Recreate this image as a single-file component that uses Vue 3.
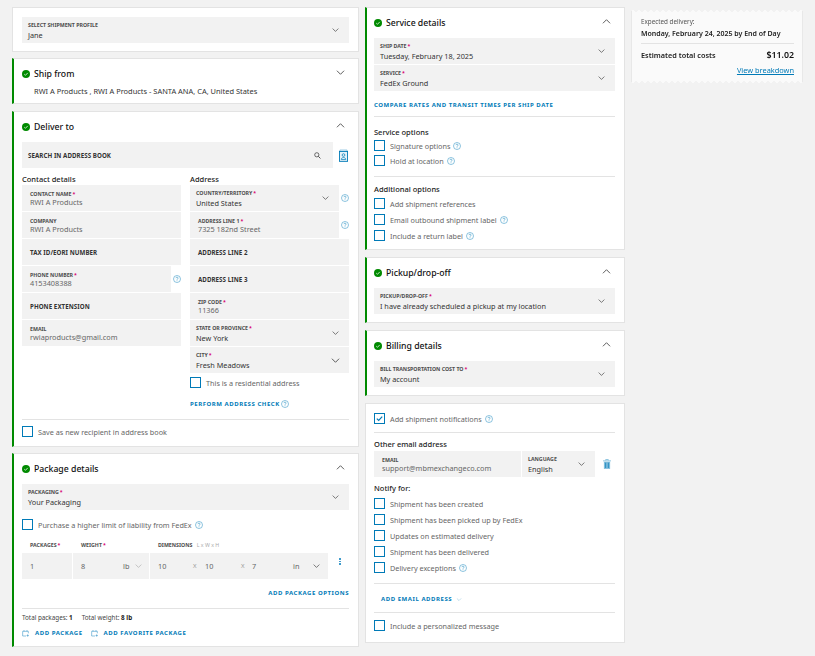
<script setup>
const contact = [
  { label: 'CONTACT NAME', req: true, value: 'RWI A Products' },
  { label: 'COMPANY', value: 'RWI A Products' },
  { label: 'TAX ID/EORI NUMBER' },
  { label: 'PHONE NUMBER', req: true, value: '4153408388', help: true },
  { label: 'PHONE EXTENSION' },
  { label: 'EMAIL', value: 'rwiaproducts@gmail.com' }
]
const address = [
  { label: 'COUNTRY/TERRITORY', req: true, value: 'United States', select: true, help: true },
  { label: 'ADDRESS LINE 1', req: true, value: '7325 182nd Street', help: true, inset: true },
  { label: 'ADDRESS LINE 2', inset: true },
  { label: 'ADDRESS LINE 3', inset: true },
  { label: 'ZIP CODE', req: true, value: '11366', inset: true },
  { label: 'STATE OR PROVINCE', req: true, value: 'New York', select: true },
  { label: 'CITY', req: true, value: 'Fresh Meadows', select: true, bigger: true }
]
const additional = [
  { text: 'Add shipment references' },
  { text: 'Email outbound shipment label', help: true },
  { text: 'Include a return label', help: true }
]
const notify = [
  { text: 'Shipment has been created' },
  { text: 'Shipment has been picked up by FedEx' },
  { text: 'Updates on estimated delivery' },
  { text: 'Shipment has been delivered' },
  { text: 'Delivery exceptions', help: true }
]
</script>

<template>
  <svg class="defs" width="0" height="0" aria-hidden="true">
    <symbol id="chev" viewBox="0 0 12 7"><path d="M1 1l5 5 5-5" fill="none" stroke="currentColor" stroke-width="1.1"/></symbol>
    <symbol id="up" viewBox="0 0 12 7"><path d="M1 6l5-5 5 5" fill="none" stroke="currentColor" stroke-width="1.1"/></symbol>
    <symbol id="ok" viewBox="0 0 16 16"><circle cx="8" cy="8" r="8" fill="#008a00"/><path d="M4.5 8.3l2.4 2.3 4.6-4.8" fill="none" stroke="#fff" stroke-width="1.5"/></symbol>
    <symbol id="help" viewBox="0 0 16 16"><circle cx="8" cy="8" r="7" fill="none" stroke="#2f93c5" stroke-width="1.1"/><path d="M5.8 6.3C5.900 4.900 6.900 4.300 8 4.300s2.200.7 2.200 1.900c0 1.600-2.200 1.700-2.200 3.300M8 10.800v1.400" fill="none" stroke="#2f93c5" stroke-width="1.2"/></symbol>
    <symbol id="pkg" viewBox="0 0 12 12"><path d="M1 3.500h8.500v3M1 3.500v7h5M3 3.500V1.500M7.500 3.500V1.500M8.500 8v3.500M6.800 9.800h3.500" fill="none" stroke="#3f9bcb" stroke-width=".9"/></symbol>
  </svg>

  <div class="page">
    <div class="col left">
      <section class="card plain pad-profile">
        <div class="field select">
          <div class="fieldtext"><span class="lab">SELECT SHIPMENT PROFILE</span><span class="val dark">Jane</span></div>
          <svg class="chev"><use href="#chev" /></svg>
        </div>
      </section>

      <section class="card shipfrom">
        <header class="head">
          <svg class="ok"><use href="#ok" /></svg>
          <h2>Ship from</h2>
          <svg class="toggle"><use href="#chev" /></svg>
        </header>
        <p class="sender">RWI A Products , RWI A Products - SANTA ANA, CA, United States</p>
      </section>

      <section class="card deliver">
        <header class="head">
          <svg class="ok"><use href="#ok" /></svg>
          <h2>Deliver to</h2>
          <svg class="toggle"><use href="#up" /></svg>
        </header>
        <div class="searchrow">
          <div class="field search">
            <span class="lab big">SEARCH IN ADDRESS BOOK</span>
            <svg class="mag" viewBox="0 0 10 10"><circle cx="4" cy="4" r="3" fill="none" stroke="#333" stroke-width="1"/><path d="M6.200 6.200l3 3" stroke="#333" stroke-width="1.200"/></svg>
          </div>
          <svg class="book" viewBox="0 0 10 14">
            <path d="M1 2V1h8v1" fill="none" stroke="#7fbcdb" stroke-width="1"/>
            <rect x=".5" y="2.500" width="9" height="11" fill="#e6f2f8" stroke="#007ab7"/>
            <circle cx="5" cy="6.500" r="1.500" fill="none" stroke="#007ab7" stroke-width=".8"/>
            <path d="M2.500 11.500c0-3 5-3 5 0z" fill="none" stroke="#007ab7" stroke-width=".8"/>
          </svg>
        </div>
        <div class="cols2">
          <div class="subcol">
            <h3 class="subhead">Contact details</h3>
            <div class="stack">
              <div v-for="f in contact" :key="f.label" class="fieldrow">
                <div class="field inset" :class="{ short: f.help }">
                  <div class="fieldtext">
                    <span class="lab" :class="{ big: !f.value }">{{ f.label }}<i v-if="f.req">*</i></span>
                    <span v-if="f.value" class="val">{{ f.value }}</span>
                  </div>
                </div>
                <svg v-if="f.help" class="help side"><use href="#help" /></svg>
              </div>
            </div>
          </div>
          <div class="subcol">
            <h3 class="subhead">Address</h3>
            <div class="stack">
              <div v-for="f in address" :key="f.label" class="fieldrow">
                <div class="field" :class="{ select: f.select, inset: f.inset, short: f.help }">
                  <div class="fieldtext">
                    <span class="lab" :class="{ big: !f.value }">{{ f.label }}<i v-if="f.req">*</i></span>
                    <span v-if="f.value" class="val" :class="{ dark: f.select }">{{ f.value }}</span>
                  </div>
                  <svg v-if="f.select" class="chev" :class="{ wide: f.bigger }"><use href="#chev" /></svg>
                </div>
                <svg v-if="f.help" class="help side"><use href="#help" /></svg>
              </div>
            </div>
            <label class="check residential"><span class="box"></span>This is a residential address</label>
            <a class="link addr">PERFORM ADDRESS CHECK<svg class="help"><use href="#help" /></svg></a>
          </div>
        </div>
        <hr class="rule saverule" />
        <label class="check"><span class="box"></span>Save as new recipient in address book</label>
      </section>

      <section class="card package">
        <header class="head">
          <svg class="ok"><use href="#ok" /></svg>
          <h2>Package details</h2>
          <svg class="toggle"><use href="#up" /></svg>
        </header>
        <div class="field select solo">
          <div class="fieldtext"><span class="lab">PACKAGING<i>*</i></span><span class="val dark">Your Packaging</span></div>
          <svg class="chev"><use href="#chev" /></svg>
        </div>
        <label class="check liability"><span class="box"></span>Purchase a higher limit of liability from FedEx<svg class="help"><use href="#help" /></svg></label>
        <div class="pkggrid">
          <span class="lab pk1">PACKAGES<i>*</i></span>
          <span class="lab pk2">WEIGHT<i>*</i></span>
          <span class="lab pk3">DIMENSIONS <em>L x W x H</em></span>
          <span></span>
          <div class="cell"><span class="val">1</span></div>
          <div class="cell weight"><span class="val w1">8</span><span class="val w2">lb</span><svg class="chev faded"><use href="#chev" /></svg></div>
          <div class="cell dims">
            <span class="val d1">10</span><span class="x x1">X</span><span class="val d2">10</span><span class="x x2">X</span><span class="val d3">7</span>
            <span class="val in">in</span><svg class="chev"><use href="#chev" /></svg>
          </div>
          <div class="dots"><b></b><b></b><b></b></div>
        </div>
        <a class="link options">ADD PACKAGE OPTIONS</a>
        <hr class="rule" />
        <p class="totals">Total packages: <b>1</b><span>Total weight: <b>8 lb</b></span></p>
        <div class="adds">
          <a class="link"><svg class="pk"><use href="#pkg" /></svg>ADD PACKAGE</a>
          <a class="link"><svg class="pk"><use href="#pkg" /></svg>ADD FAVORITE PACKAGE</a>
        </div>
      </section>
    </div>

    <div class="col mid">
      <section class="card service">
        <header class="head">
          <svg class="ok"><use href="#ok" /></svg>
          <h2>Service details</h2>
          <svg class="toggle"><use href="#up" /></svg>
        </header>
        <div class="stack">
          <div class="field select solo">
            <div class="fieldtext"><span class="lab">SHIP DATE<i>*</i></span><span class="val dark">Tuesday, February 18, 2025</span></div>
            <svg class="chev"><use href="#chev" /></svg>
          </div>
          <div class="field select solo">
            <div class="fieldtext"><span class="lab">SERVICE<i>*</i></span><span class="val dark">FedEx Ground</span></div>
            <svg class="chev"><use href="#chev" /></svg>
          </div>
        </div>
        <a class="link compare">COMPARE RATES AND TRANSIT TIMES PER SHIP DATE</a>
        <hr class="rule" />
        <h3 class="subhead optionhead">Service options</h3>
        <div class="checks tight">
          <label class="check"><span class="box"></span>Signature options<svg class="help"><use href="#help" /></svg></label>
          <label class="check"><span class="box"></span>Hold at location<svg class="help"><use href="#help" /></svg></label>
        </div>
        <hr class="rule r2" />
        <h3 class="subhead optionhead second">Additional options</h3>
        <div class="checks addl">
          <label v-for="c in additional" :key="c.text" class="check"><span class="box"></span>{{ c.text }}<svg v-if="c.help" class="help"><use href="#help" /></svg></label>
        </div>
      </section>

      <section class="card single">
        <header class="head">
          <svg class="ok"><use href="#ok" /></svg>
          <h2>Pickup/drop-off</h2>
          <svg class="toggle"><use href="#up" /></svg>
        </header>
        <div class="field select solo">
          <div class="fieldtext"><span class="lab">PICKUP/DROP-OFF<i>*</i></span><span class="val dark">I have already scheduled a pickup at my location</span></div>
          <svg class="chev"><use href="#chev" /></svg>
        </div>
      </section>

      <section class="card single">
        <header class="head">
          <svg class="ok"><use href="#ok" /></svg>
          <h2>Billing details</h2>
          <svg class="toggle"><use href="#up" /></svg>
        </header>
        <div class="field select solo">
          <div class="fieldtext"><span class="lab">BILL TRANSPORTATION COST TO<i>*</i></span><span class="val dark">My account</span></div>
          <svg class="chev"><use href="#chev" /></svg>
        </div>
      </section>

      <section class="card plain notify">
        <label class="check">
          <span class="box on"><svg viewBox="0 0 10 10"><path d="M2 5.200l2.100 2L8 2.800" fill="none" stroke="#007ab7" stroke-width="1.300"/></svg></span>
          Add shipment notifications<svg class="help"><use href="#help" /></svg>
        </label>
        <hr class="rule n1" />
        <h3 class="subhead other">Other email address</h3>
        <div class="emailrow">
          <div class="field inset emailf">
            <div class="fieldtext"><span class="lab">EMAIL</span><span class="val">support@mbmexchangeco.com</span></div>
          </div>
          <div class="field select langf">
            <div class="fieldtext"><span class="lab">LANGUAGE</span><span class="val dark">English</span></div>
            <svg class="chev"><use href="#chev" /></svg>
          </div>
          <svg class="trash" viewBox="0 0 9 11">
            <path d="M3 1.500V.5h3v1M0 2h9" fill="none" stroke="#7fbcdb"/>
            <path d="M1 3h7v8H1z" fill="#7fbcdb"/>
            <path d="M3 4v6M6 4v6" stroke="#007ab7" stroke-width=".8"/>
          </svg>
        </div>
        <h3 class="subhead notifyhead">Notify for:</h3>
        <div class="checks">
          <label v-for="c in notify" :key="c.text" class="check"><span class="box"></span>{{ c.text }}<svg v-if="c.help" class="help"><use href="#help" /></svg></label>
        </div>
        <hr class="rule n2" />
        <a class="link addemail">ADD EMAIL ADDRESS<svg class="tiny"><use href="#chev" /></svg></a>
        <hr class="rule n3" />
        <label class="check"><span class="box"></span>Include a personalized message</label>
      </section>
    </div>

    <aside class="col right">
      <div class="receipt">
        <p class="exp">Expected delivery:</p>
        <p class="date">Monday, February 24, 2025 by End of Day</p>
        <hr class="rule r3" />
        <div class="cost"><span>Estimated total costs</span><strong>$11.02</strong></div>
        <a class="breakdown">View breakdown</a>
      </div>
    </aside>
  </div>
</template>

<style>
html, body { margin: 0; background: #f2f2f2; }
</style>

<style scoped>
.defs { position: absolute; }
.page {
  display: flex; align-items: flex-start; gap: 6px;
  padding: 7px 0 0 12px; width: 815px; height: 656px; box-sizing: border-box; overflow: hidden;
  background: #f2f2f2;
  font-family: "Noto Sans", sans-serif; color: #4d4d4d; font-size: 7.25px;
}
.col { display: flex; flex-direction: column; gap: 6px; }
.left { width: 347px; }
.mid { width: 260px; }
.right { width: 172px; padding-top: 2px; }
.card {
  background: #fff; border: 1px solid #e3e3e3; border-left: 2px solid #008a00;
  box-sizing: border-box; padding: 0 9px 0 8px;
}
.card.plain { border-left: 1px solid #e3e3e3; padding-left: 9px; }
.mid .card { padding-left: 7px; }
.mid .card.plain { padding-left: 8px; }
.pad-profile { height: 45px; padding-top: 9px; }
.shipfrom { height: 46px; }
.deliver { height: 336px; margin-top: 1px; }
.package { height: 194px; }
.service { height: 243px; }
.single { height: 66px; margin-top: 1px; }
.notify { height: 240px; margin-top: 1px; padding-top: 9px; }
.head { display: flex; align-items: center; height: 30px; padding-bottom: 1px; box-sizing: border-box; }
.ok { width: 8px; height: 8px; margin-right: 4px; }
.head h2 { margin: 0; font-size: 8.7px; font-weight: 500; color: #111; flex: 1; }
.toggle { width: 9px; height: 5px; color: #333; margin-right: 4px; margin-top: -2px; }
.sender { margin: -3px 0 0 12px; color: #333; font-size: 7.45px; }
.stack { display: flex; flex-direction: column; gap: 1px; }
.field {
  background: #f2f2f2; height: 26px; display: flex; align-items: center;
  padding: 0 6px; box-sizing: border-box; flex: 1; min-width: 0;
}
.field.solo, .pad-profile .field { flex: none; }
.field.inset { padding-left: 8px; }
.fieldtext { display: flex; flex-direction: column; flex: 1; min-width: 0; padding-top: 3px; }
.lab { font-size: 5.25px; line-height: 7px; font-weight: 700; color: #4d4d4d; white-space: nowrap; }
.lab.big { font-size: 6.2px; letter-spacing: .05px; color: #333; }
.lab i { color: #d6006e; font-style: normal; margin-left: 1px; }
.lab em { font-style: normal; font-weight: 400; color: #aaa; margin-left: 3px; }
.val { font-size: 7.3px; line-height: 12px; color: #666; white-space: nowrap; }
.val.dark { color: #333; }
.inset .val { line-height: 9px; }
.inset .fieldtext { padding-top: 1px; }
.chev { width: 7px; height: 4px; color: #333; margin-right: 4px; flex: none; }
.chev.wide { width: 9px; height: 5px; margin-right: 3px; }
.chev.faded { color: #aaa; }
.searchrow { display: flex; align-items: center; gap: 6px; }
.search { justify-content: space-between; flex: 0 0 311px; padding-right: 12px; }
.mag { width: 7px; height: 7px; }
.book { width: 9px; height: 13px; }
.cols2 { display: grid; grid-template-columns: 159px 159px; gap: 9px; margin-top: 6px; }
.subhead { margin: 0; font-size: 7.5px; line-height: 11px; font-weight: 500; color: #222; }
.fieldrow { display: flex; align-items: center; }
.field.short { flex: 0 0 149px; }
.help { width: 8px; height: 8px; margin-left: 3px; flex: none; }
.help.side { margin-left: 2px; }
.check { display: flex; align-items: center; height: 11px; color: #666; white-space: nowrap; }
.box {
  width: 9px; height: 9px; border: 1px solid #007ab7; background: #fff; margin-right: 5px; flex: none; display: block;
}
.box svg { display: block; width: 9px; height: 9px; }
.residential { margin-top: 4px; }
.link { display: flex; align-items: center; color: #007ab7; font-size: 6px; font-weight: 700; letter-spacing: .55px; white-space: nowrap; }
.addr { margin-top: 12px; }
.addr .help { margin-left: 1px; }
.rule { border: 0; border-top: 1px solid #e3e3e3; margin: 0; }
.saverule { margin-top: 11px; margin-bottom: 6px; }
.liability { margin-top: 9px; }
.pkggrid {
  display: grid; grid-template-columns: 50px 76px 178px 21px; column-gap: 1px; margin-top: 11px;
}
.pkggrid > .lab { line-height: 8px; margin-bottom: 4px; }
.pk1, .pk2, .pk3 { padding-left: 8px; }
.cell { background: #f2f2f2; height: 26px; display: flex; align-items: center; padding-left: 8px; box-sizing: border-box; }
.cell > * { flex: none; }
.w1 { width: 42px; }
.w2 { width: 12px; }
.dims .x { color: #999; font-size: 6px; }
.d1 { width: 35px; }
.x1 { width: 12px; }
.d2 { width: 36px; }
.x2 { width: 11px; }
.d3 { width: 41px; }
.in { width: 20px; }
.dots { display: flex; flex-direction: column; gap: 1px; padding: 5px 0 0 10px; }
.dots b { width: 1.500px; height: 1.500px; background: #3f9bcb; display: block; }
.options { justify-content: flex-end; margin-top: 10px; }
.package .rule { margin-top: 11px; }
.totals { margin: 4px 0 0; font-size: 6.3px; line-height: 9px; color: #444; }
.totals b { color: #222; }
.totals span { margin-left: 9px; }
.adds { display: flex; gap: 8px; margin-top: 7px; }
.pk { width: 8px; height: 8px; margin-right: 5px; }
.compare { margin-top: 10px; }
.service .rule { margin-top: 7px; }
.optionhead { margin-top: 10px; }
.checks { display: flex; flex-direction: column; gap: 5px; margin-top: 4px; }
.checks.tight { gap: 4px; margin-top: 2px; }
.checks.addl { margin-top: 3px; }
.service .r2 { margin-top: 10px; }
.second { margin-top: 7px; }
.n1 { margin-top: 8px; }
.other { margin-top: 6px; margin-bottom: 1px; }
.emailrow { display: flex; align-items: center; gap: 1px; }
.emailf { flex: 0 0 147px; }
.langf { flex: 0 0 73px; }
.trash { width: 8px; height: 10px; margin-left: 7px; }
.notifyhead { margin-top: 6px; }
.n2 { margin-top: 10px; }
.addemail { margin: 11px 0 9px 7px; }
.tiny { width: 6px; height: 3px; margin-left: 4px; color: #7fbcdb; }
.n3 { margin-bottom: 7px; }
.receipt {
  box-sizing: border-box; height: 75px; padding: 8px 8px 0 9px; background: #fafafa; width: 172px;
  -webkit-mask:
    conic-gradient(from 135deg at top, #0000, #000 1deg 89deg, #0000 90deg) top/6px 3px repeat-x,
    conic-gradient(from -45deg at bottom, #0000, #000 1deg 89deg, #0000 90deg) bottom/6px 3px repeat-x,
    linear-gradient(#000, #000) center/100% calc(100% - 6px) no-repeat;
  border-left: 1px solid #e8e8e8; border-right: 1px solid #e8e8e8;
}
.exp { margin: 0; font-size: 6.3px; line-height: 9px; color: #555; }
.date { margin: 3px 0 0; font-size: 7px; line-height: 10px; font-weight: 600; color: #222; white-space: nowrap; }
.r3 { margin-top: 4px; }
.cost { display: flex; justify-content: space-between; align-items: center; margin-top: 5px; font-size: 7.3px; font-weight: 600; color: #222; }
.cost strong { font-size: 8.8px; font-weight: 600; color: #111; }
.breakdown { display: block; text-align: right; margin-top: 4px; font-size: 7.4px; color: #007ab7; text-decoration: underline; }
</style>
